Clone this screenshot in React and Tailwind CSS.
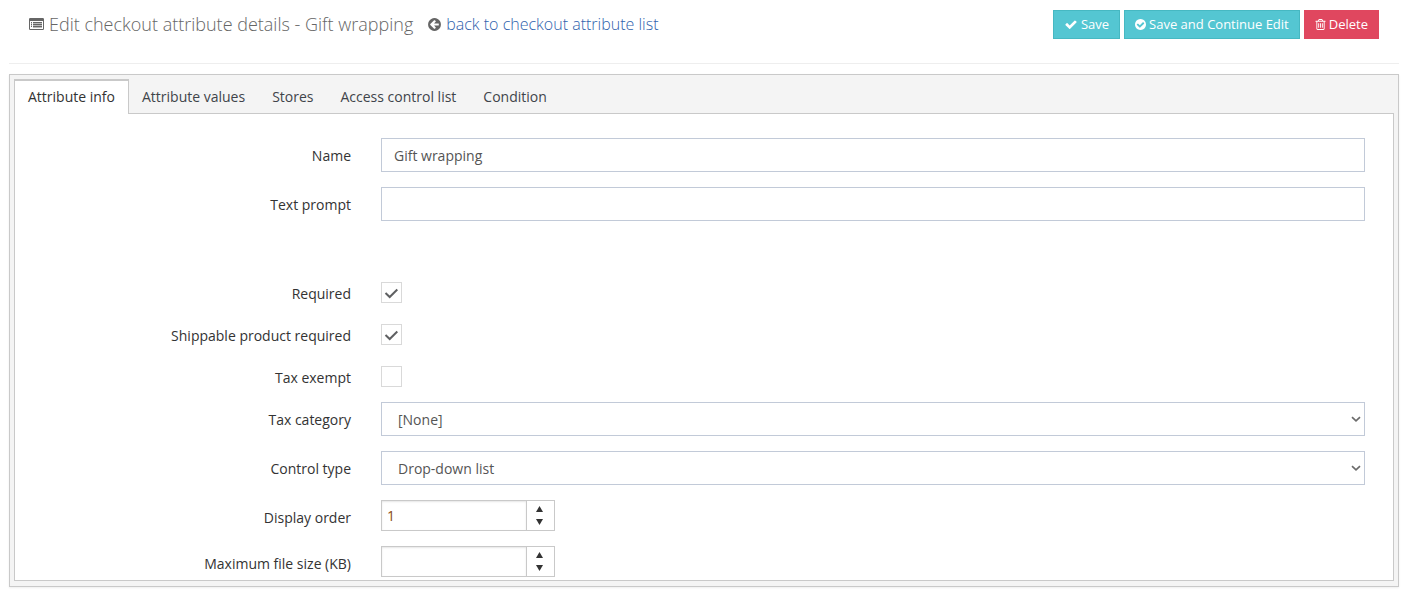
import { useState } from "react";

const iconPaths = {
  check: "M1671 566q0 40-28 68l-724 724-136 136q-28 28-68 28t-68-28l-136-136-362-362q-28-28-28-68t28-68l136-136q28-28 68-28t68 28l294 295 656-657q28-28 68-28t68 28l136 136q28 28 28 68z",
  checkCircle: "M1412 734q0-28-18-46l-91-90q-19-19-45-19t-45 19l-408 407-226-226q-19-19-45-19t-45 19l-91 90q-18 18-18 46 0 27 18 45l362 362q19 19 45 19 27 0 46-19l543-543q18-18 18-45zm252 162q0 209-103 385.5t-279.5 279.5-385.5 103-385.5-103-279.5-279.5-103-385.5 103-385.5 279.5-279.5 385.5-103 385.5 103 279.5 279.5 103 385.5z",
  trash: "M704 736v576q0 14-9 23t-23 9h-64q-14 0-23-9t-9-23v-576q0-14 9-23t23-9h64q14 0 23 9t9 23zm256 0v576q0 14-9 23t-23 9h-64q-14 0-23-9t-9-23v-576q0-14 9-23t23-9h64q14 0 23 9t9 23zm256 0v576q0 14-9 23t-23 9h-64q-14 0-23-9t-9-23v-576q0-14 9-23t23-9h64q14 0 23 9t9 23zm128 724v-948h-896v948q0 22 7 40.5t14.5 27 10.5 8.5h832q3 0 10.5-8.5t14.5-27 7-40.5zm-672-1076h448l-48-117q-7-9-17-11h-317q-10 2-17 11zm928 32v64q0 14-9 23t-23 9h-96v948q0 83-47 143.5t-113 60.5h-832q-66 0-113-58.5t-47-141.5v-952h-96q-14 0-23-9t-9-23v-64q0-14 9-23t23-9h309l70-167q15-37 54-63t79-26h320q40 0 79 26t54 63l70 167h309q14 0 23 9t9 23z",
  arrowLeft: "M1408 960v-128q0-26-19-45t-45-19h-502l189-189q19-19 19-45t-19-45l-91-91q-18-18-45-18t-45 18l-362 362-91 91q-18 18-18 45t18 45l91 91 362 362q18 18 45 18t45-18l91-91q18-18 18-45t-18-45l-189-189h502q26 0 45-19t19-45zm256-64q0 209-103 385.5t-279.5 279.5-385.5 103-385.5-103-279.5-279.5-103-385.5 103-385.5 279.5-279.5 385.5-103 385.5 103 279.5 279.5 103 385.5z"
};

const tabs = ["Attribute info", "Attribute values", "Stores", "Access control list", "Condition"];

function Icon({ name, className, viewBox = "128 0 1536 1792" }) {
  return (
    <svg className={className} viewBox={viewBox} fill="currentColor" aria-hidden="true">
      <path d={iconPaths[name]} />
    </svg>
  );
}

function Row({ id, label, children }) {
  return (
    <div className="flex">
      <label htmlFor={id} className="w-1/4 px-[15px] pt-2 leading-5 text-right text-[#333333]">
        {label}
      </label>
      <div className="w-3/4 px-[15px]">{children}</div>
    </div>
  );
}

function TextBox({ id, defaultValue }) {
  return (
    <input
      id={id}
      type="text"
      defaultValue={defaultValue}
      className="block w-full h-[34px] px-3 border border-[#c2cad8] bg-white text-[#555555] outline-none"
    />
  );
}

function CheckBox({ id, defaultChecked }) {
  return (
    <div className="pt-[6px]">
      <div className="relative w-[21px] h-[21px]">
        <input
          id={id}
          type="checkbox"
          defaultChecked={defaultChecked}
          className="peer block appearance-none w-full h-full border border-[#d9d9d9] bg-white"
        />
        <svg className="hidden peer-checked:block absolute inset-0 pointer-events-none" viewBox="0 0 21 21" fill="none" stroke="#5f6062" strokeWidth="2">
          <path d="M4.5 11 L8.7 15 L16.3 7.5" />
        </svg>
      </div>
    </div>
  );
}

function SelectBox({ id, options }) {
  return (
    <div className="relative">
      <select id={id} className="block appearance-none w-full h-[34px] px-4 pt-[1px] border border-[#c2cad8] bg-white text-[#555555] outline-none">
        {options.map((option) => (
          <option key={option}>{option}</option>
        ))}
      </select>
      <svg className="absolute right-1 top-3 w-[10px] h-[10px] pointer-events-none" viewBox="0 0 10 10" fill="none" stroke="#6b6b6b" strokeWidth="1.7">
        <path d="M1 3.2 L5 6.8 L9 3.2" />
      </svg>
    </div>
  );
}

function NumberBox({ id, initial }) {
  const [value, setValue] = useState(initial);

  return (
    <div className="flex w-[174px] h-[31px] border border-[#c9c9c9] bg-white">
      <input
        id={id}
        type="text"
        inputMode="numeric"
        value={value}
        onChange={(e) => setValue(e.target.value)}
        className="min-w-0 flex-1 px-[5px] text-[#8a4b14] outline-none shadow-[inset_0_1px_2px_#e6e6e6]"
      />
      <div className="flex flex-col w-7 border-l border-[#c9c9c9] text-[#333333]">
        <button type="button" aria-label="Increase value" onClick={() => setValue(String(Number(value) + 1))} className="flex flex-1 items-center justify-center pt-[2px] pr-[2px]">
          <svg className="w-[7px] h-[6px]" viewBox="0 0 7 6" fill="currentColor"><path d="M3.5 0 L7 6 H0 Z" /></svg>
        </button>
        <button type="button" aria-label="Decrease value" onClick={() => setValue(String(Number(value) - 1))} className="flex flex-1 items-center justify-center pb-[2px] pr-[2px]">
          <svg className="w-[7px] h-[6px]" viewBox="0 0 7 6" fill="currentColor"><path d="M0 0 H7 L3.5 6 Z" /></svg>
        </button>
      </div>
    </div>
  );
}

export default function App() {
  const [activeTab, setActiveTab] = useState("Attribute info");

  return (
    <div className="bg-white px-[10px] pb-3 pl-[9px] text-sm font-['Open_Sans',sans-serif]">
      <header className="flex justify-between h-16 px-5 pt-[10px] border-b border-[#eeeeee]">
        <div className="flex items-center h-7 text-[#666666]">
          <svg className="w-[15px] h-3 mr-[5px]" viewBox="0 0 15 12" fill="currentColor" aria-hidden="true">
            <path fillRule="evenodd" d="M1.2 0 H13.8 Q15 0 15 1.2 V10.8 Q15 12 13.8 12 H1.2 Q0 12 0 10.8 V1.2 Q0 0 1.2 0 Z M1 3 V10.7 Q1 11 1.3 11 H13.7 Q14 11 14 10.7 V3 Z" />
            <path d="M2 4 H3 V5 H2 Z M2 6 H3 V7 H2 Z M2 8 H3 V9 H2 Z M4 4 H13 V5 H4 Z M4 6 H13 V7 H4 Z M4 8 H13 V9 H4 Z" />
            <path opacity="0.45" d="M2 5 H3 V6 H2 Z M2 7 H3 V8 H2 Z M4 5 H13 V6 H4 Z M4 7 H13 V8 H4 Z M4 9 H13 V10 H4 Z" />
          </svg>
          <h1 className="text-lg font-light">Edit checkout attribute details - Gift wrapping</h1>
          <Icon name="arrowLeft" className="w-[13px] h-[15px] ml-[15px] mr-[5px]" />
          <a href="#list" className="text-base font-light text-[#2f62ad]">back to checkout attribute list</a>
        </div>
        <div className="flex gap-1 h-[29px] text-[13px] text-white">
          <button type="button" className="flex items-center px-[10px] gap-[3px] border border-[#46b8c2] bg-[#54c6d2]">
            <Icon name="check" viewBox="0 0 1792 1792" className="w-[14px] h-[13px]" />
            Save
          </button>
          <button type="button" className="flex items-center px-[10px] gap-[3px] border border-[#46b8c2] bg-[#54c6d2]">
            <Icon name="checkCircle" className="w-[11px] h-[13px]" />
            Save and Continue Edit
          </button>
          <button type="button" className="flex items-center px-[10px] gap-[3px] border border-[#e0475f] bg-[#e0475f]">
            <Icon name="trash" className="w-[11px] h-[13px]" />
            Delete
          </button>
        </div>
      </header>

      <main className="mt-[10px] p-1 pb-[5px] border border-[#c9c9c9] bg-[#f4f4f4] shadow-[0_1px_2px_#eeeeee]">
        <div role="tablist" className="flex">
          {tabs.map((tab) => (
            <button
              key={tab}
              type="button"
              role="tab"
              aria-selected={tab === activeTab}
              onClick={() => setActiveTab(tab)}
              className={
                tab === activeTab
                  ? "relative -mb-px h-[35px] px-[13px] pb-[2px] border border-t-2 border-b-0 border-[#c9c9c9] bg-white text-[#333333]"
                  : "h-[34px] pl-[13px] pr-[14px] pt-[2px] text-[#3f444a]"
              }
            >
              {tab}
            </button>
          ))}
        </div>

        <form className="flex flex-col gap-[15px] px-[13px] pt-6 pb-[3px] border border-[#c9c9c9] bg-white">
          <Row id="name" label="Name">
            <TextBox id="name" defaultValue="Gift wrapping" />
          </Row>
          <Row id="prompt" label="Text prompt">
            <TextBox id="prompt" />
          </Row>
          <div className="flex flex-col gap-[14px] pt-10 -mb-px">
            <Row id="required" label="Required">
              <CheckBox id="required" defaultChecked />
            </Row>
            <Row id="shippable" label="Shippable product required">
              <CheckBox id="shippable" defaultChecked />
            </Row>
            <Row id="exempt" label="Tax exempt">
              <CheckBox id="exempt" />
            </Row>
          </div>
          <Row id="category" label="Tax category">
            <SelectBox id="category" options={["[None]"]} />
          </Row>
          <Row id="control" label="Control type">
            <SelectBox id="control" options={["Drop-down list"]} />
          </Row>
          <Row id="order" label="Display order">
            <NumberBox id="order" initial="1" />
          </Row>
          <Row id="size" label="Maximum file size (KB)">
            <NumberBox id="size" initial="" />
          </Row>
        </form>
      </main>
    </div>
  );
}
